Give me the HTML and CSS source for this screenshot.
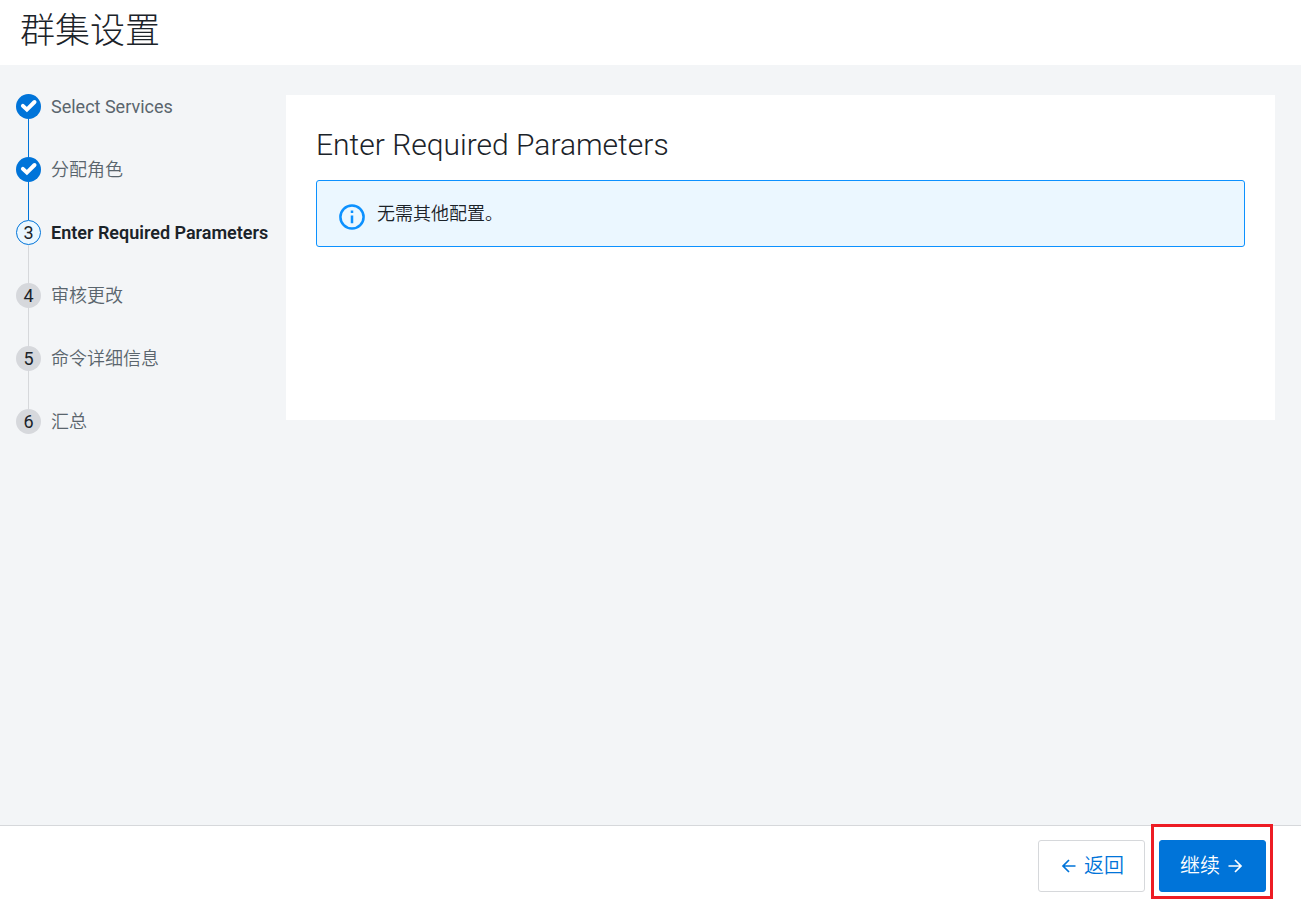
FILE: index.html
```html
<!DOCTYPE html>
<html lang="zh-CN">
<head>
  <meta charset="UTF-8" />
  <meta name="viewport" content="width=device-width, initial-scale=1.0"/>
  <title>群集设置</title>
  <link rel="stylesheet" href="styles.css">
</head>
<body>

  <header class="page-header">
    <h1>群集设置</h1>
  </header>

  <main class="wizard">
    <ol class="steps">
      <li class="step done">
        <span class="marker">
          <svg viewBox="0 0 25 25" width="25" height="25"><path d="M6.9 11.9 L10.9 15.6 L18.5 8" /></svg>
        </span>
        <span class="step-name">Select Services</span>
      </li>
      <li class="step done">
        <span class="marker">
          <svg viewBox="0 0 25 25" width="25" height="25"><path d="M6.9 11.9 L10.9 15.6 L18.5 8" /></svg>
        </span>
        <span class="step-name">分配角色</span>
      </li>
      <li class="step current" aria-current="step">
        <span class="marker">3</span>
        <span class="step-name">Enter Required Parameters</span>
      </li>
      <li class="step">
        <span class="marker">4</span>
        <span class="step-name">审核更改</span>
      </li>
      <li class="step">
        <span class="marker">5</span>
        <span class="step-name">命令详细信息</span>
      </li>
      <li class="step">
        <span class="marker">6</span>
        <span class="step-name">汇总</span>
      </li>
    </ol>

    <section class="panel">
      <h2>Enter Required Parameters</h2>
      <div class="alert">
        <svg class="alert-icon" viewBox="0 0 26 26" width="26" height="26">
          <circle cx="13" cy="13" r="11.6" />
          <path d="M13 6.6 V9 M13 11.6 V19.2" />
        </svg>
        <p>无需其他配置。</p>
      </div>
    </section>
  </main>

  <footer class="actions">
    <button type="button" class="btn">
      <svg viewBox="0 0 20 20" width="20" height="20"><path d="M16.5 10 H4 M10 4 L4 10 L10 16" /></svg>
      返回
    </button>
    <div class="highlight">
      <button type="button" class="btn btn-primary">
        继续
        <svg viewBox="0 0 20 20" width="20" height="20"><path d="M3.5 10 H16 M10 4 L16 10 L10 16" /></svg>
      </button>
    </div>
  </footer>

</body>
</html>
```
FILE: styles.css
```css
* {
  box-sizing: border-box;
}

body {
  margin: 0;
  min-height: 100vh;
  display: flex;
  flex-direction: column;
  font-family: Roboto, 'Noto Sans CJK SC', sans-serif;
  font-size: 18px;
  font-weight: 350;
  line-height: 25px;
  color: #1b2329;
  background-color: #f3f5f7;
}

h1, h2, p {
  margin: 0;
}

h1, h2 {
  font-weight: 300;
}

.page-header {
  padding: 12px 20px 13px;
  background-color: #fff;
}

h1 {
  font-size: 35px;
  line-height: 40px;
}

.wizard {
  flex: 1;
  display: flex;
  align-items: flex-start;
  padding: 29px 26px 29px 16px;
}

/* step list */
.steps {
  flex: 0 0 270px;
  margin: 0;
  padding: 0;
  list-style: none;
}

.step {
  position: relative;
  display: flex;
  gap: 10px;
  padding-bottom: 38px;
  color: #5a656d;
}

.step:not(:last-child)::after {
  content: "";
  position: absolute;
  top: 25px;
  bottom: 0;
  left: 12px;
  width: 1px;
  background-color: #d6d8db;
}

.step.done::after {
  background-color: #0074d9;
}

.marker {
  width: 25px;
  height: 25px;
  border-radius: 50%;
  background-color: #d6d8dc;
  color: #1b2329;
  text-align: center;
}

.done .marker {
  background-color: #0074d9;
}

.marker svg {
  display: block;
  fill: none;
  stroke: #fff;
  stroke-width: 4;
  stroke-linecap: round;
}

.current .marker {
  border: 1px solid #0074d9;
  background-color: #ebf7ff;
  line-height: 23px;
}

.step-name {
  white-space: nowrap;
}

.marker,
.step:first-child .step-name {
  font-weight: 400;
}

.current .step-name {
  font-weight: 600;
  color: #1b2329;
}

/* content */
.panel {
  flex: 1;
  min-height: 325px;
  margin-top: 1px;
  padding: 30px;
  background-color: #fff;
}

h2 {
  margin-bottom: 15px;
  font-size: 30px;
  line-height: 40px;
}

.alert {
  display: flex;
  gap: 12px;
  padding: 20px 22px;
  border: 1px solid #0c91ff;
  border-radius: 3px;
  background-color: #ebf7ff;
}

.alert-icon {
  margin-top: 3px;
  margin-bottom: -4px;
  fill: none;
  stroke: #0c91ff;
  stroke-width: 2.5;
}

/* bottom bar */
.actions {
  display: flex;
  justify-content: flex-end;
  gap: 14px;
  padding: 14px 35px 9px;
  border-top: 1px solid #d6d8db;
  background-color: #fff;
}

.btn {
  display: flex;
  align-items: center;
  justify-content: center;
  gap: 5px;
  height: 52px;
  padding: 0 20px;
  min-width: 107px;
  border: 1px solid #d6d8db;
  border-radius: 3px;
  background-color: #fff;
  color: #0074d9;
  font-family: inherit;
  font-size: 20px;
  font-weight: 350;
  line-height: 24px;
  cursor: pointer;
}

.btn svg {
  fill: none;
  stroke: currentColor;
  stroke-width: 1.7;
}

.btn-primary {
  border-color: #0074d9;
  background-color: #0074d9;
  color: #fff;
}

.highlight {
  position: relative;
}

.highlight::after {
  content: "";
  position: absolute;
  inset: -16px -7px -7px -8px;
  border: 3px solid #ed1c24;
  pointer-events: none;
}
```
